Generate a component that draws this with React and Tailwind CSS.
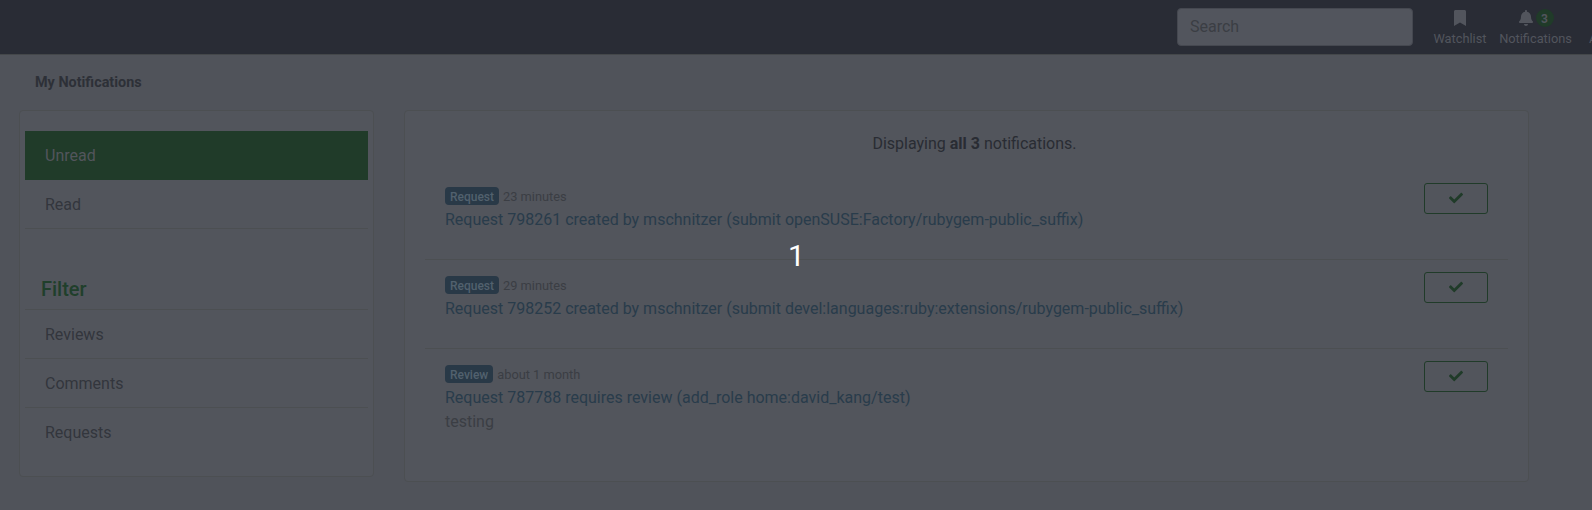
import { FaBell, FaBookmark, FaCheck } from "react-icons/fa";

const rows = [
  { kind: "Request", age: "23 minutes", title: "Request 798261 created by mschnitzer (submit openSUSE:Factory/rubygem-public_suffix)" },
  { kind: "Request", age: "29 minutes", title: "Request 798252 created by mschnitzer (submit devel:languages:ruby:extensions/rubygem-public_suffix)" },
  { kind: "Review", age: "about 1 month", title: "Request 787788 requires review (add_role home:david_kang/test)", note: "testing" },
];

function Header() {
  return (
    <header className="flex h-[55px] items-start justify-end overflow-hidden border-b border-[#44474a] bg-[#292c35] text-[12.8px] leading-[20px] text-[#52555d]">
      <div className="mt-2 mr-[21px] flex h-[38px] w-[236px] shrink-0 items-center rounded border border-[#454850] bg-[#52555d] px-3 text-base text-[#3b3e44]">
        Search
      </div>
      <a className="mt-[9px] flex w-[52px] shrink-0 flex-col items-center">
        <span className="flex h-[18px] items-center"><FaBookmark size={16} /></span>
        <span className="mt-[2px]">Watchlist</span>
      </a>
      <a className="mt-[9px] ml-[13px] flex w-[73px] shrink-0 flex-col items-center">
        <span className="flex h-[18px] items-center gap-[2px]">
          <FaBell size={16} />
          <span className="flex h-[18px] w-[18px] items-center justify-center rounded-full bg-[#203b29] pt-px text-[12px] font-bold leading-none">3</span>
        </span>
        <span className="mt-[2px]">Notifications</span>
      </a>
      <a className="mt-[29px] ml-[17px] w-[3px] shrink-0">A</a>
    </header>
  );
}

function Sidebar() {
  return (
    <aside className="h-[367px] w-[355px] shrink-0 rounded border border-[#4c4f52] bg-[#52555c] px-[5px] pt-5 text-[#33363d]">
      <div className="flex h-[49px] items-center bg-[#203b29] px-5 text-[#52555c]">Unread</div>
      <div className="flex h-[49px] items-center border-b border-[#4c4f52] px-5 pt-px">Read</div>
      <h5 className="flex h-[81px] items-end border-b border-[#4c4f52] px-4 pb-[8px] text-xl leading-6 font-medium text-[#203f2b]">Filter</h5>
      <div className="flex h-[49px] items-center border-b border-[#4c4f52] px-5 pt-px">Reviews</div>
      <div className="flex h-[49px] items-center border-b border-[#4c4f52] px-5 pt-px">Comments</div>
      <div className="flex h-[49px] items-center px-5">Requests</div>
    </aside>
  );
}

function Row({ kind, age, title, note }) {
  return (
    <li className="flex h-[89px] items-start justify-between border-b border-[#4c4f52] px-5 pt-3 last:border-b-0">
      <div className="pt-px">
        <div className="flex h-6 items-start gap-1 pt-[3px] text-[12.8px] leading-5 text-[#3b3e44]">
          <span className="flex h-[18px] items-center rounded bg-[#293947] px-[5px] pt-px text-[12px] font-medium text-[#52616e]">{kind}</span>
          <span>{age}</span>
        </div>
        <div className="leading-6 text-[#293c4b]">{title}</div>
        {note && <div className="leading-6 text-[#3b3e44]">{note}</div>}
      </div>
      <button className="flex h-[31px] w-16 items-center justify-center rounded-[3px] border border-[#203b29] pb-[2px] text-[#203b29]">
        <FaCheck size={14} />
      </button>
    </li>
  );
}

export default function App() {
  return (
    <div className="relative h-[510px] w-[1592px] overflow-hidden bg-[#50535a] font-[Roboto,sans-serif] text-base">
      <Header />
      <h1 className="h-[55px] pt-[18px] pl-[35px] text-[14.4px] leading-[20px] font-bold text-[#2d3037]">My Notifications</h1>
      <main className="flex items-start gap-[30px] pl-[19px]">
        <Sidebar />
        <section className="h-[372px] w-[1125px] rounded border border-[#4c4f52] bg-[#52555c] px-5 pt-5">
          <p className="h-10 pt-px pl-4 text-center leading-6 text-[#292c33]">
            Displaying <b>all 3</b> notifications.
          </p>
          <ul>{rows.map((row) => <Row key={row.title} {...row} />)}</ul>
        </section>
      </main>
      <div className="absolute inset-0 flex items-center justify-center pt-[2px] pl-px text-[30px] leading-none text-white">1</div>
    </div>
  );
}
